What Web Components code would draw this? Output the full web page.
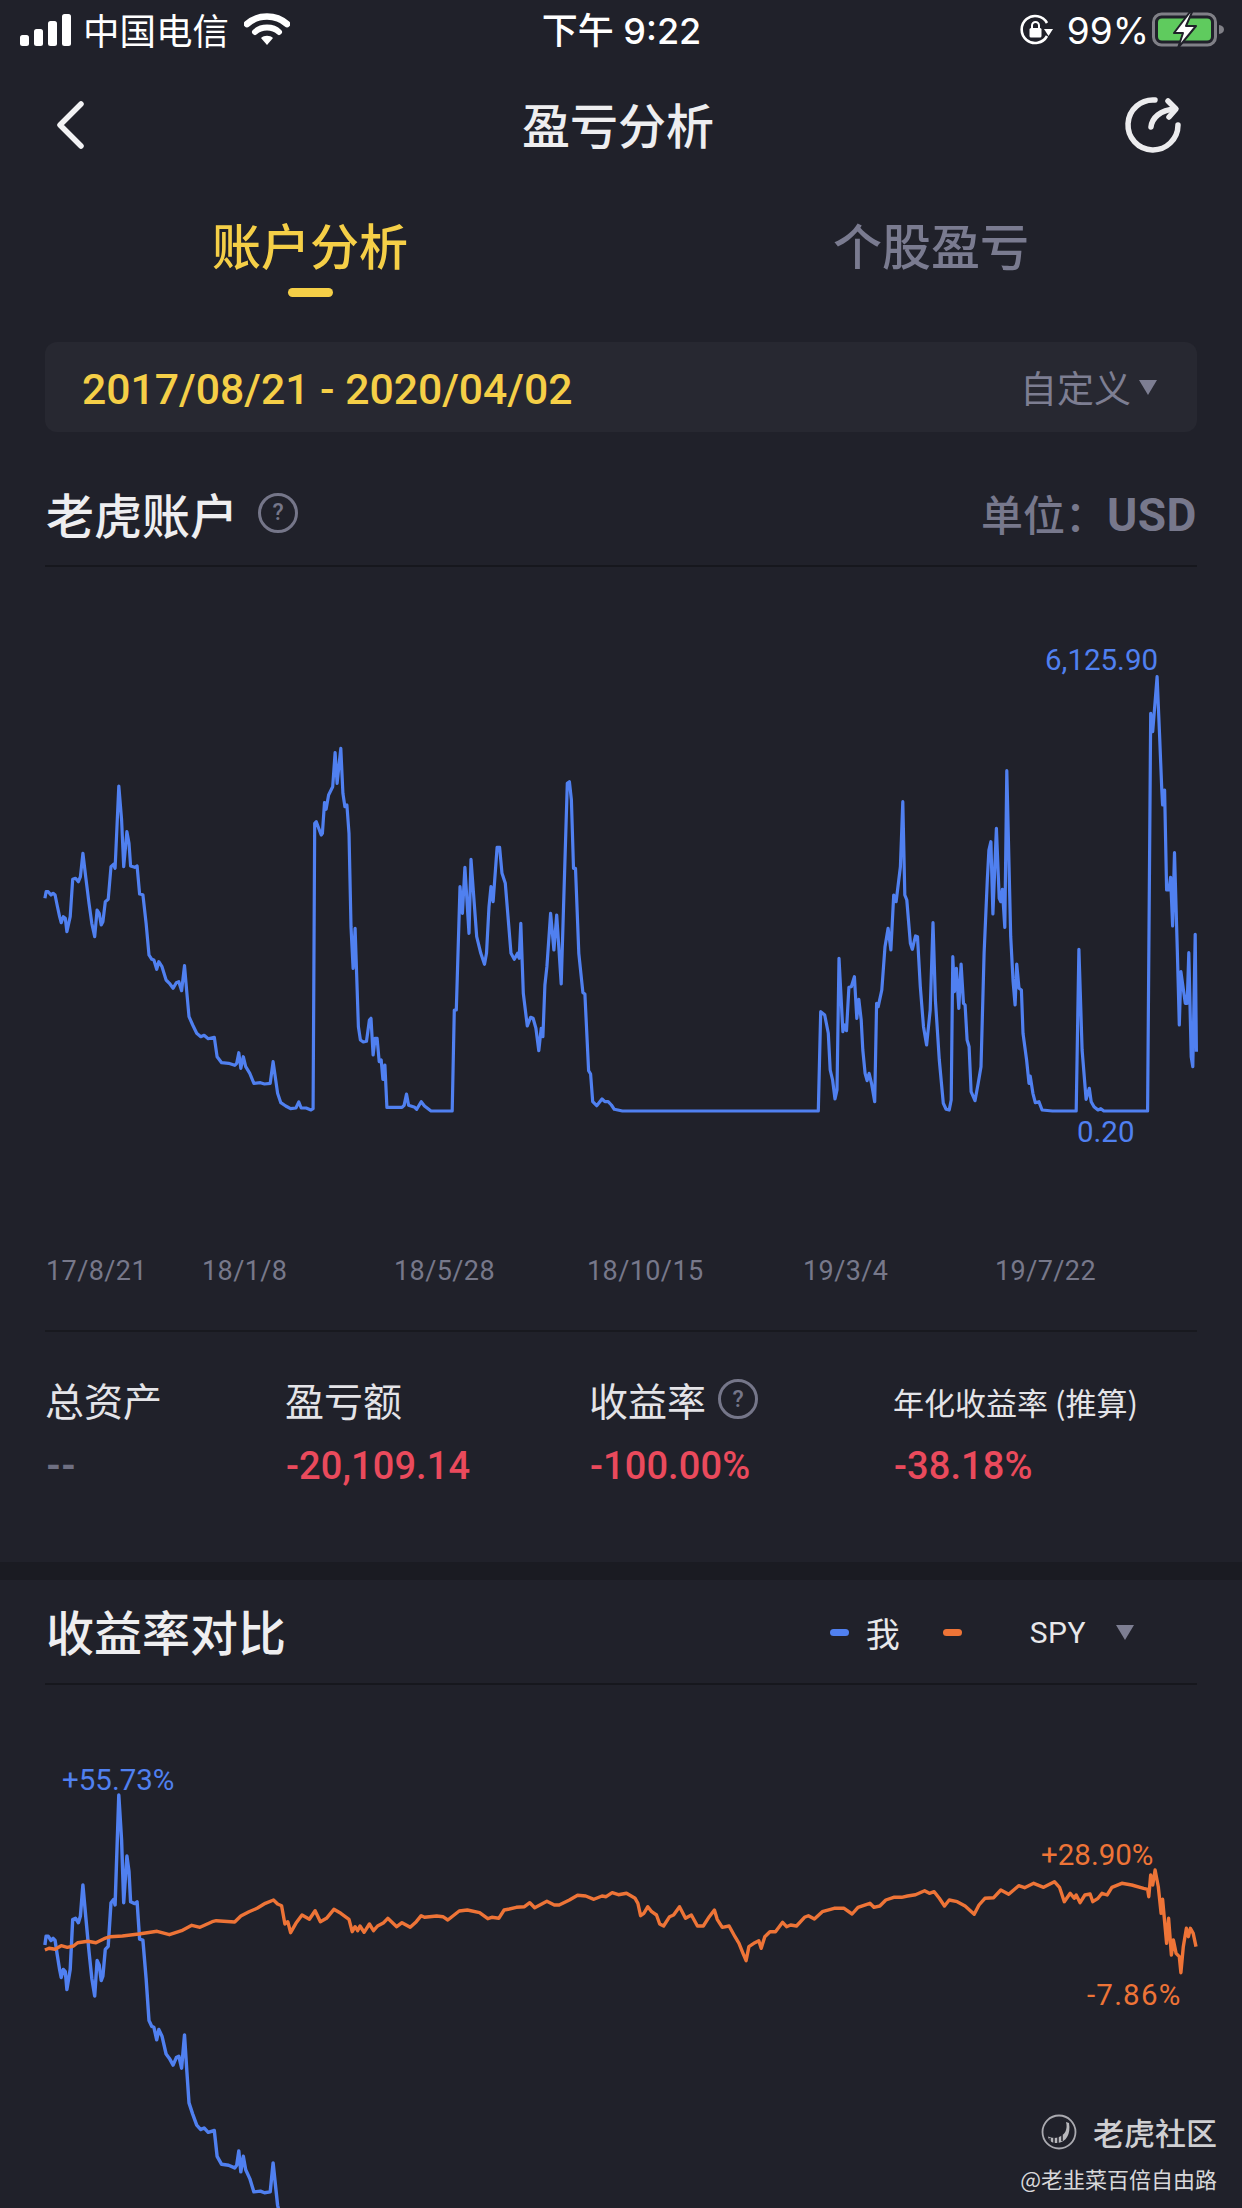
<!DOCTYPE html>
<html lang="zh">
<head>
<meta charset="utf-8">
<title>盈亏分析</title>
<style>
  html, body { margin: 0; background: #20212a; }
  body { width: 1242px; height: 2208px; overflow: hidden; font-family: Roboto, "Noto Sans CJK SC", sans-serif; }
</style>
</head>
<body>
<profit-page></profit-page>
<script>
// traced from the reference, in crop coordinates
const BLUE_LEFT = `110,835 113,815 118,815 125,825 130,820 135,825 140,855 146,890 150,908 155,890 160,895 164,935 172,890 178,778 185,775 192,785 197,770 203,700 210,770 218,850 225,910 232,950 238,870 243,880 248,915 252,905 258,845 265,838 272,740 278,733 282,745 291,498 298,600 303,740 311,635 316,670 320,738 330,742 336,738 342,822 350,824 358,910 365,1005 372,1018 377,1020 384,1048 389,1025 397,1040 407,1080 415,1090 424,1105 432,1088 438,1085 445,1112 452,1037 458,1120 463,1190 472,1215 482,1240 492,1250 500,1246 510,1256 525,1252 532,1310 543,1328 560,1330 575,1336 580,1330 585,1298 590,1345 596,1310 602,1340 612,1360 622,1390 638,1388 648,1392 662,1390 669,1325 680,1420 688,1448 700,1458 712,1466 725,1464 732,1446 738,1464 750,1464 762,1470 767,1466 771,610 775,605 787,645 790,640 795,548 799,568 805,525 815,500 821,398 826,490 835,385 840,520 845,560 850,555 855,640 860,920 865,1045 870,925 878,1220 883,1260 890,1266 898,1264 905,1200 909,1195 914,1305 919,1255 924,1255 929,1325 934,1320 938,1378 943,1335 948,1462 985,1462 990,1456 996,1422 1001,1456 1016,1462 1021,1468 1032,1445 1040,1458 1056,1473 1108,1473 1113,1170 1118,1170 1127,800 1133,880 1139,742 1149,940 1154,718 1168,950 1178,1000 1187,1033 1192,1000 1198,860 1203,800 1208,845 1218,682 1224,682 1230,760 1238,790 1252,1000 1260,1018 1268,1000 1272,1015 1276,910 1282,1120 1292,1218 1300,1192 1306,1195 1313,1225 1320,1292 1326,1225 1330,1250 1335,1095 1340,1040 1349,880 1357,990 1364,885 1375,1092 1390,490 1395,485 1400,540 1405,745 1410,745 1418,1000 1428,1118 1433,1122 1442,1352 1447,1362 1452,1445 1462,1457 1475,1437 1482,1445 1490,1445 1498,1455 1505,1468 1525,1473`
const BLUE_RIGHT = `500,1473 506,1175 516,1185 525,1240 530,1350 536,1380 542,1437 547,1410 552,1015 562,1235 566,1215 571,1232 577,1102 583,1100 591,1070 597,1195 602,1138 608,1200 612,1290 618,1360 623,1382 628,1360 634,1390 642,1445 647,1150 651,1160 660,1110 668,980 676,925 683,990 690,825 696,845 707,740 713,545 718,825 723,840 732,970 737,988 745,948 750,950 757,1100 765,1220 773,1275 782,1170 789,908 795,1140 805,1320 815,1450 822,1468 830,1470 835,1440 839,1010 843,1115 848,1045 854,1165 860,1032 866,1150 870,1155 875,1260 880,1280 885,1415 895,1442 903,1390 910,1340 918,1000 926,780 930,690 935,665 940,882 949,625 956,835 960,845 964,808 970,922 975,452 985,950 991,1085 996,1155 1000,1032 1006,1105 1012,1110 1016,1240 1025,1320 1031,1390 1034,1368 1041,1420 1047,1448 1056,1445 1064,1470 1090,1473 1150,1473 1157,988 1165,1290 1175,1438 1183,1405 1188,1445 1195,1460 1205,1470 1212,1466 1220,1473 1330,1473 1338,280 1343,335 1354,170 1360,340 1366,510 1368,555 1373,510 1378,810 1384,810 1388,772 1393,918 1398,698 1405,990 1410,1215 1414,1055 1425,1150 1430,1150 1434,998 1440,1310 1444,1340 1450,943 1453,1295`
const ORANGE_LEFT = `110,630 120,625 135,628 150,617 165,622 180,618 190,608 215,604 235,608 255,596 270,590 300,588 340,582 385,574 415,584 445,572 470,556 490,562 520,545 530,542 575,546 590,528 610,515 630,505 650,490 670,480 680,492 690,497 698,552 705,545 712,578 725,550 740,525 758,538 772,512 785,545 800,535 818,508 835,520 855,538 863,575 870,560 876,572 882,558 892,577 905,552 915,572 925,558 940,548 950,535 972,560 985,548 1005,562 1020,545 1032,527 1040,532 1070,528 1085,530 1097,540 1125,513 1145,510 1175,518 1195,536 1205,532 1222,535 1235,510 1245,508 1265,502 1285,500 1298,488 1310,503 1340,484 1358,495 1370,495 1395,480 1415,466 1435,468 1455,478 1475,468 1485,470 1500,458 1515,464 1535,460`
const ORANGE_RIGHT = `38,295 45,310 52,347 60,340 70,320 80,335 92,345 100,372 110,378 125,350 135,345 150,320 165,355 180,345 195,378 210,378 225,350 238,330 245,358 258,382 275,378 290,410 300,430 310,460 318,482 325,440 340,428 350,422 356,445 365,410 378,395 392,395 410,367 420,380 430,375 445,378 465,352 475,347 490,357 510,335 540,325 565,325 585,342 600,322 630,310 640,322 655,318 670,300 690,292 710,292 725,288 745,284 768,272 780,280 792,275 805,295 818,318 830,300 850,305 870,318 893,343 905,315 920,295 942,293 960,270 980,283 1005,257 1020,263 1043,250 1068,262 1095,245 1108,262 1120,305 1135,280 1145,295 1150,285 1160,308 1172,285 1185,282 1192,305 1205,295 1215,280 1228,285 1240,262 1265,250 1290,255 1320,265 1330,268 1333,290 1338,225 1343,255 1349,210 1357,260 1364,340 1368,298 1378,430 1383,355 1390,465 1395,420 1402,460 1410,470 1414,518 1420,440 1428,385 1433,410 1438,385 1445,400 1452,440`

const parse = (s, fn) => s.trim().split(/\s+/).map(p => fn(...p.split(',').map(Number)))
const blue = [
  ...parse(BLUE_LEFT, (x, y) => [x / 2.45, 620 + y / 3]),
  ...parse(BLUE_RIGHT, (x, y) => [620 + x / 2.521, 620 + y / 3]),
]
const orange = [
  ...parse(ORANGE_LEFT, (x, y) => [x / 2.45, 1740 + y / 3]),
  ...parse(ORANGE_RIGHT, (x, y) => [620 + x / 2.521, 1800 + y / 3]),
]
// the comparison chart has a taller scale, the blue line runs off the page
const blueScaled = blue.map(([x, y]) => [x, 1795 + (y - 786) * 1.335])
const blueCut = blueScaled.slice(0, blueScaled.findIndex(p => p[1] > 2210) + 1)

const SERIES = {
  asset: [{ color: '#5080f0', width: 3.2, pts: blue }],
  compare: [
    { color: '#5080f0', width: 3.4, pts: blueCut },
    { color: '#ee7437', width: 3.4, pts: orange },
  ],
}

const define = (name, html, init) => customElements.define(name, class extends HTMLElement {
  constructor() {
    super()
    this.attachShadow({ mode: 'open' })
    this.shadowRoot.innerHTML = html
  }
  connectedCallback() { if (init) init(this) }
})

define('status-bar', `
  <style>
    :host { display: grid; grid-template-columns: 1fr auto 1fr; align-items: center; height: 60px; padding: 0 16px 0 20px; box-sizing: border-box; color: #fff; font-size: 35px; }
    .l, .r { display: flex; align-items: center; }
    .r { justify-content: flex-end; }
    .carrier { margin-left: 12px; font-family: "Noto Sans CJK SC", sans-serif; font-size: 36.5px; line-height: 50px; }
    .wifi { margin-left: 15px; }
    .time { font-family: Inter, "Noto Sans CJK SC", sans-serif; font-size: 36px; font-weight: 500; margin: 0 3px 4px 0; }
    .pct { font-family: Inter, sans-serif; font-size: 37px; margin: 0 3px 0 13px; }
    svg { display: block; }
  </style>
  <div class="l">
    <svg width="51" height="32" viewBox="0 0 51 32" fill="#fff"><rect x="0" y="21" width="9" height="11" rx="2.5"/><rect x="14" y="15" width="9" height="17" rx="2.5"/><rect x="28" y="7" width="9" height="25" rx="2.5"/><rect x="42" y="0" width="9" height="32" rx="2.5"/></svg>
    <span class="carrier">中国电信</span>
    <svg class="wifi" width="46" height="34" viewBox="0 0 46 34"><path d="M3 11C14 1 32 1 43 11" fill="none" stroke="#fff" stroke-width="6.5" stroke-linecap="round"/><path d="M11 19C17 13 29 13 35 19" fill="none" stroke="#fff" stroke-width="6" stroke-linecap="round"/><path d="M17 25c3-3 9-3 12 0l-6 7z" fill="#fff"/></svg>
  </div>
  <div class="time">下午 9:22</div>
  <div class="r">
    <svg width="34" height="32" viewBox="0 0 34 32"><path d="M27 22A13.5 13.5 0 1 1 27 9" fill="none" stroke="#fff" stroke-width="2.6"/><path d="M24 15h9l-4.5 7z" fill="#fff"/><rect x="9.5" y="14" width="12" height="9.5" rx="1.5" fill="#fff"/><path d="M12 14v-2.5a3.5 3.5 0 0 1 7 0V14" fill="none" stroke="#fff" stroke-width="2"/></svg>
    <span class="pct">99%</span>
    <svg width="74" height="36" viewBox="0 0 74 36"><rect x="1.5" y="2" width="62" height="31" rx="8" fill="none" stroke="#808087" stroke-width="3"/><rect x="6" y="6.5" width="53" height="22" rx="4" fill="#5fcb5e"/><path d="M67 13c3 .5 5 2 5 4.500s-2 4-5 4.500z" fill="#808087"/><path d="M38 0L22 21h9l-5 15 18-22h-10l6-14z" fill="#fff" stroke="#20212a" stroke-width="2" stroke-linejoin="round"/></svg>
  </div>
`)

define('nav-bar', `
  <style>
    :host { display: grid; grid-template-columns: 1fr auto 1fr; align-items: center; height: 130px; padding: 0 60px 0 54px; color: #eeeef0; }
    .title { font-family: "Noto Sans CJK SC", sans-serif; font-size: 48px; font-weight: 500; margin-bottom: 5px; }
    svg { display: block; }
    .more { justify-self: end; }
  </style>
  <svg width="34" height="50" viewBox="0 0 34 50"><path d="M27 4L6 25l21 21" fill="none" stroke="#f2f2f4" stroke-width="5.500" stroke-linecap="round" stroke-linejoin="round"/></svg>
  <div class="title"><slot></slot></div>
  <svg class="more" width="58" height="58" viewBox="0 0 58 58" fill="none" stroke="#ececee" stroke-width="5.500" stroke-linecap="round" stroke-linejoin="round"><path d="M31 4A25 25 0 1 0 54 29"/><path d="M27 31c1-9 9-17 24-18"/><path d="M44 5l8 8-7 8"/></svg>
`)

define('tab-item', `
  <style>
    :host { display: flex; flex-direction: column; align-items: center; font-family: "Noto Sans CJK SC", sans-serif; font-size: 49px; font-weight: 500; line-height: 70px; color: #7a7b90; }
    :host([active]) { color: #f5cf47; }
    i { display: block; width: 45px; height: 9px; border-radius: 5px; margin-top: 9px; }
    :host([active]) i { background: #f5cf47; }
  </style>
  <slot></slot><i></i>
`)

define('tab-bar', `
  <style>
    :host { display: grid; grid-template-columns: 620px 622px; height: 152px; padding-top: 19px; box-sizing: border-box; }
  </style>
  <slot></slot>
`)

define('date-range', `
  <style>
    :host { display: flex; align-items: center; justify-content: space-between; height: 90px; margin: 0 45px; padding: 0 40px 0 37px; background: #272831; border-radius: 12px; }
    .date { font-size: 42.700px; font-weight: 500; color: #f5cf47; padding-top: 3px; }
    .mode { display: flex; align-items: center; gap: 8px; font-family: "Noto Sans CJK SC", sans-serif; font-size: 37px; color: #7d7e92; }
    .mode i { border: 9px solid transparent; border-top: 15px solid #7d7e92; border-bottom: 0; }
  </style>
  <span class="date"><slot></slot></span>
  <span class="mode"><slot name="mode"></slot><i></i></span>
`)

define('help-icon', `
  <style>
    :host { display: inline-flex; align-items: center; justify-content: center; box-sizing: border-box; width: 40px; height: 40px; border: 3.500px solid #757689; border-radius: 50%; color: #757689; font-family: Roboto, sans-serif; font-size: 23px; font-weight: 500; }
  </style>
  ?
`)

define('section-head', `
  <style>
    :host { display: flex; align-items: center; justify-content: space-between; margin: 0 45px; padding-left: 1px; border-bottom: 2px solid #16171d; box-sizing: border-box; }
    .title { display: flex; align-items: center; gap: 20px; font-family: "Noto Sans CJK SC", sans-serif; font-size: 48px; font-weight: 500; color: #eeeef0; }
  </style>
  <div class="title"><slot name="title"></slot></div>
  <slot></slot>
`)

define('unit-label', `
  <style>
    :host { display: block; font-family: "Noto Sans CJK SC", sans-serif; font-size: 42px; font-weight: 500; color: #77788c; }
    b { font-family: Roboto, sans-serif; font-size: 46px; font-weight: 700; letter-spacing: 0.5px; }
  </style>
  <slot></slot><b><slot name="code"></slot></b>
`)

define('cmp-legend', `
  <style>
    :host { display: flex; align-items: center; margin-right: 63px; padding-top: 4px; color: #e8e8ea; font-family: Roboto, "Noto Sans CJK SC", sans-serif; font-size: 32px; }
    i { display: block; width: 19px; height: 7px; border-radius: 4px; }
    .b { background: #5080f0; margin-right: 17px; }
    .o { background: #ee7437; margin: 0 68px 0 43px; }
    .me { font-size: 34px; }
    .spy { font-size: 30px; letter-spacing: 0.5px; }
    .t { margin-left: 30px; border: 9.500px solid transparent; border-top: 15px solid #7d7e92; border-bottom: 0; width: 0; height: 0; border-radius: 0; }
  </style>
  <i class="b"></i><span class="me">我</span><i class="o"></i><span class="spy">SPY</span><i class="t"></i>
`)

define('line-chart', `
  <style>
    :host { display: block; position: relative; overflow: hidden; }
    svg { display: block; position: absolute; left: 0; top: 0; width: 1242px; height: 100%; }
    polyline { fill: none; stroke-linejoin: round; }
  </style>
  <svg></svg>
  <slot></slot>
`, el => {
  const top = +el.getAttribute('top'), h = el.offsetHeight
  const svg = el.shadowRoot.querySelector('svg')
  svg.setAttribute('viewBox', `0 ${top} 1242 ${h}`)
  svg.innerHTML = SERIES[el.getAttribute('series')].map(s =>
    `<polyline stroke="${s.color}" stroke-width="${s.width}" points="${s.pts.map(p => p[0].toFixed(1) + ',' + p[1].toFixed(1)).join(' ')}"/>`
  ).join('')
})

define('chart-tag', `
  <style>
    :host { position: absolute; font-size: 29.500px; line-height: 36px; white-space: nowrap; font-family: Roboto, sans-serif; }
    :host([tone=blue]) { color: #5080f0; }
    :host([tone=orange]) { color: #ee7437; }
  </style>
  <slot></slot>
`)

define('x-axis', `
  <style>
    :host { display: grid; grid-template-columns: 156px 192px 193px 216px 192px auto; margin: 0 45px; padding: 0 0 40px 1px; height: 80px; align-items: center; border-bottom: 2px solid #18191f; box-sizing: border-box; color: #77788a; font-size: 27px; font-family: Roboto, sans-serif; letter-spacing: 0.4px; }
  </style>
  <slot></slot>
`)

define('stat-grid', `
  <style>
    :host { display: grid; grid-template-columns: 240px 304px 304px auto; padding: 41px 0 0 45px; height: 230px; box-sizing: border-box; }
  </style>
  <slot></slot>
`)

define('stat-item', `
  <style>
    :host { display: flex; flex-direction: column; }
    .k { display: flex; align-items: center; gap: 12px; height: 52px; font-family: "Noto Sans CJK SC", sans-serif; font-size: 39px; color: #e4e4e8; }
    :host([small]) .k { font-size: 31px; padding-top: 4px; box-sizing: border-box; }
    .v { margin-top: 15px; padding-left: 1px; font-size: 38px; line-height: 52px; font-weight: 500; letter-spacing: 0.1px; color: #ea4a5c; }
    :host([muted]) .v { color: #6e6f82; font-weight: 700; }
  </style>
  <div class="k"><slot name="k"></slot></div>
  <div class="v"><slot></slot></div>
`)

define('water-mark', `
  <style>
    :host { position: absolute; right: 25px; bottom: 14px; display: flex; flex-direction: column; align-items: flex-end; gap: 10px; font-family: "Noto Sans CJK SC", sans-serif; }
    .top { display: flex; align-items: center; gap: 16px; font-size: 31px; color: #cfcfd2; line-height: 40px; font-weight: 500; }
    .sub { font-size: 22px; color: #d8d8da; line-height: 32px; }
    svg { display: block; }
  </style>
  <div class="top">
    <svg width="36" height="36" viewBox="0 0 36 36" fill="none"><circle cx="18" cy="18" r="16.500" stroke="#aaaab0" stroke-width="1.800"/><path d="M25 8c2 7-1 13-7 15-4 1.500-8 1-11-.5 1 5 5 7 10 6.500 8-1 13-9 11-20z" fill="#b8b8bc"/><path d="M9 24v5M13 24v6M17 23v7M21 21v6" stroke="#20212a" stroke-width="1.500"/></svg>
    <span>老虎社区</span>
  </div>
  <div class="sub">@老韭菜百倍自由路</div>
`)

define('profit-page', `
  <style>
    :host { display: block; position: relative; width: 1242px; height: 2208px; overflow: hidden; background: #20212a; }
    .band { height: 18px; background: #1a1b22; }
    .h1 { height: 135px; padding-top: 28px; }
    .h2 { height: 105px; padding-bottom: 3px; }
    .c1 { height: 685px; }
    .c2 { height: 523px; }
  </style>
  <status-bar></status-bar>
  <nav-bar>盈亏分析</nav-bar>
  <tab-bar>
    <tab-item active>账户分析</tab-item>
    <tab-item>个股盈亏</tab-item>
  </tab-bar>
  <date-range>2017/08/21 - 2020/04/02<span slot="mode">自定义</span></date-range>
  <section-head class="h1">
    <span slot="title">老虎账户</span>
    <help-icon slot="title"></help-icon>
    <unit-label>单位：<span slot="code">USD</span></unit-label>
  </section-head>
  <line-chart class="c1" series="asset" top="567">
    <chart-tag tone="blue" style="left:1045px;top:75px">6,125.90</chart-tag>
    <chart-tag tone="blue" style="left:1077px;top:547px">0.20</chart-tag>
  </line-chart>
  <x-axis>
    <span>17/8/21</span><span>18/1/8</span><span>18/5/28</span><span>18/10/15</span><span>19/3/4</span><span>19/7/22</span>
  </x-axis>
  <stat-grid>
    <stat-item muted><span slot="k">总资产</span>--</stat-item>
    <stat-item><span slot="k">盈亏额</span>-20,109.14</stat-item>
    <stat-item><span slot="k">收益率</span><help-icon slot="k"></help-icon>-100.00%</stat-item>
    <stat-item small><span slot="k">年化收益率 (推算)</span>-38.18%</stat-item>
  </stat-grid>
  <div class="band"></div>
  <section-head class="h2">
    <span slot="title">收益率对比</span>
    <cmp-legend></cmp-legend>
  </section-head>
  <line-chart class="c2" series="compare" top="1685">
    <chart-tag tone="blue" style="left:62px;top:77px">+55.73%</chart-tag>
    <chart-tag tone="orange" style="left:1041px;top:152px">+28.90%</chart-tag>
    <chart-tag tone="orange" style="left:1087px;top:292px;letter-spacing:1.2px">-7.86%</chart-tag>
  </line-chart>
  <water-mark></water-mark>
`)
</script>
</body>
</html>
